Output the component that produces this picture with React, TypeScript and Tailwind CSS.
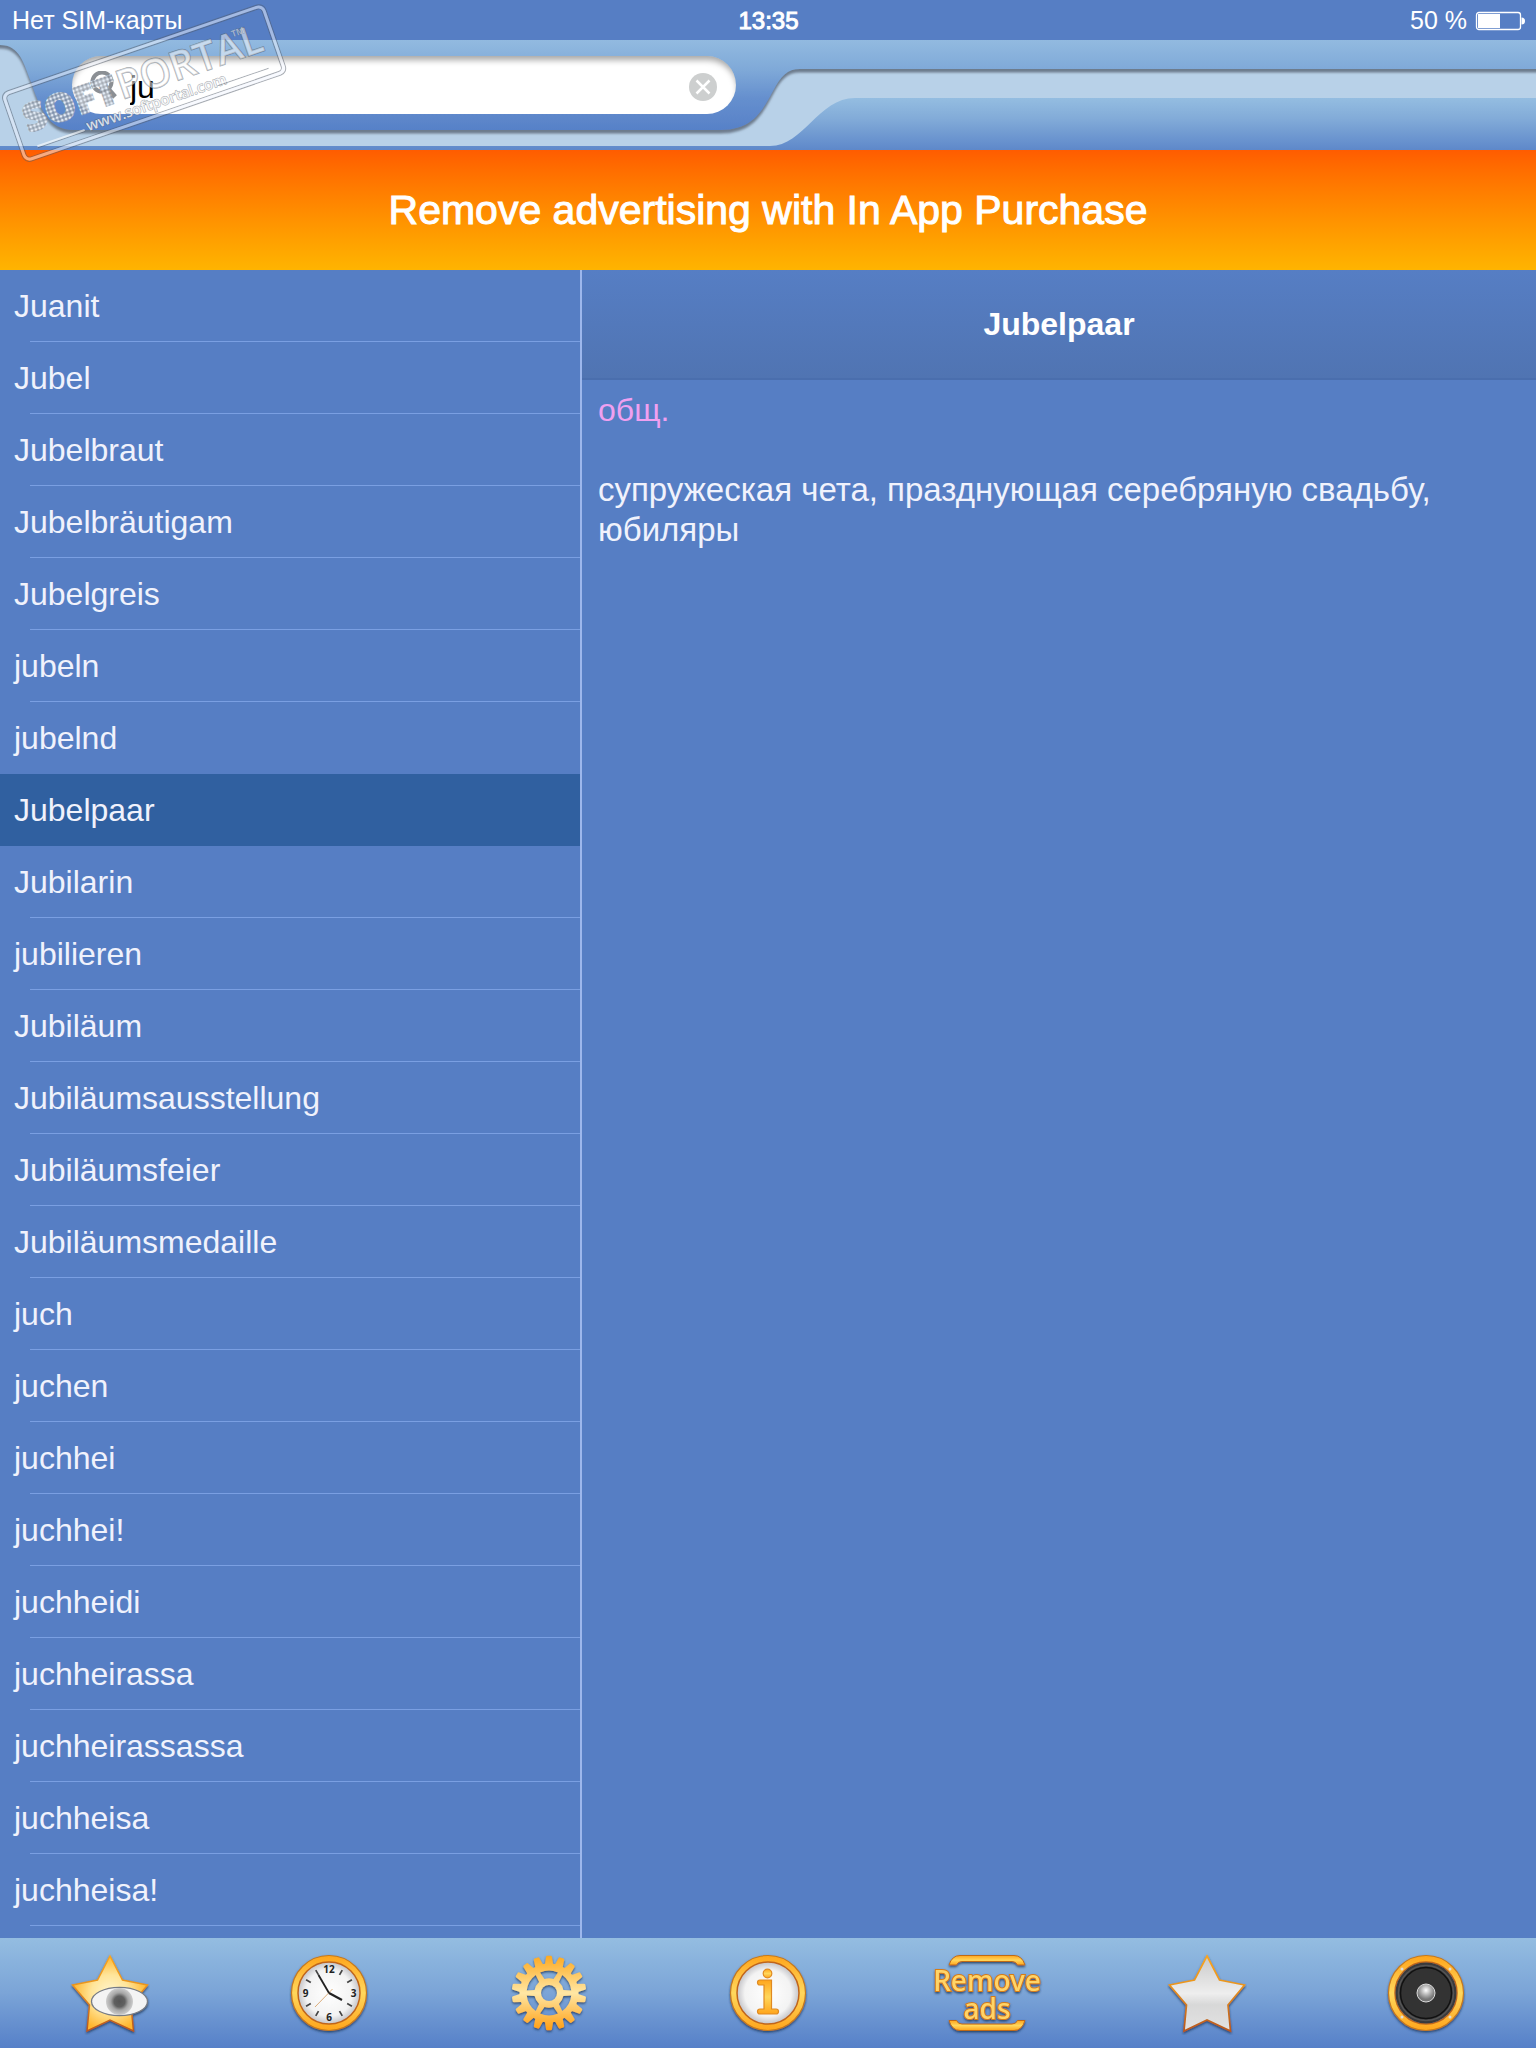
const words = [
  "Juanit", "Jubel", "Jubelbraut", "Jubelbräutigam", "Jubelgreis", "jubeln", "jubelnd", "Jubelpaar",
  "Jubilarin", "jubilieren", "Jubiläum", "Jubiläumsausstellung", "Jubiläumsfeier", "Jubiläumsmedaille",
  "juch", "juchen", "juchhei", "juchhei!", "juchheidi", "juchheirassa", "juchheirassassa", "juchheisa", "juchheisa!",
];

function Battery() {
  return (
    <svg width="50" height="20" viewBox="0 0 50 20" aria-label="Battery">
      <rect x="1.500" y="1.500" width="44" height="17" rx="2.5" fill="none" stroke="#fff" strokeWidth="1.3" />
      <rect x="3" y="3" width="22" height="14" fill="#fff" />
      <path d="M46.500 6.500q3.500 0 3.500 3.500t-3.500 3.500z" fill="#fff" />
    </svg>
  );
}

function Watermark() {
  return (
    <svg className="pointer-events-none absolute left-0 top-0" width="292" height="168" viewBox="0 0 292 168" aria-hidden="true">
      <defs>
        <pattern id="dots" width="4" height="4" patternUnits="userSpaceOnUse">
          <rect width="4" height="4" fill="#5c6672" fillOpacity=".65" />
          <rect x=".5" y=".5" width="3" height="3" fill="#e3ebf5" />
        </pattern>
      </defs>
      <g transform="translate(0 93) rotate(-19)" fontFamily="Open Sans, sans-serif">
        <g fill="none" stroke="#4f5a68" strokeOpacity=".5" strokeWidth="1">
          <rect x=".5" y=".5" width="278" height="74" rx="7" />
          <rect x="4.500" y="4.500" width="270" height="66" rx="4" />
        </g>
        <rect x="2.500" y="2.500" width="274" height="70" rx="6" fill="none" stroke="#f2f5ff" strokeOpacity=".5" strokeWidth="3" />
        <text x="14" y="47" fontSize="39" fontWeight="800" fill="url(#dots)" stroke="url(#dots)" strokeWidth="1.500">SOFT</text>
        <g stroke="#4f5a68" strokeOpacity=".5" paintOrder="stroke fill" fill="#fff" fillOpacity=".5">
          <text x="113" y="46" fontSize="40" fontWeight="600" strokeWidth="1.400">PORTAL</text>
          <text x="71" y="65" fontSize="15" fontWeight="600" strokeWidth="1" fillOpacity=".75">www.softportal.com</text>
          <text x="238" y="23" fontSize="9" fontWeight="600" strokeWidth=".6">TM</text>
        </g>
        <path d="M18 64H68M208 64H262" stroke="#4f5a68" strokeOpacity=".5" strokeWidth="1" />
        <path d="M18 62.500H68M208 62.500H262" stroke="#fff" strokeOpacity=".6" strokeWidth="2" />
      </g>
    </svg>
  );
}

function IconDefs() {
  return (
    <svg className="absolute" width="0" height="0" aria-hidden="true">
      <defs>
        <linearGradient id="ring" x1="0" y1="0" x2="0" y2="1">
          <stop offset="0" stopColor="#ffa51c" /><stop offset=".5" stopColor="#ffd75c" /><stop offset="1" stopColor="#ffa51c" />
        </linearGradient>
        <linearGradient id="edge" x1="0" y1="0" x2="0" y2="1">
          <stop offset="0" stopColor="#f9a51d" /><stop offset=".4" stopColor="#e8941f" /><stop offset="1" stopColor="#b9581d" />
        </linearGradient>
        <linearGradient id="silver" x1="0" y1="0" x2="0" y2="1">
          <stop offset="0" stopColor="#c9c9c9" /><stop offset=".5" stopColor="#eeeeee" /><stop offset=".65" stopColor="#d8d8d8" /><stop offset="1" stopColor="#e2e2e2" />
        </linearGradient>
        <radialGradient id="starGlow" cx=".5" cy=".5" r=".5">
          <stop offset="0" stopColor="#fff6cf" /><stop offset=".5" stopColor="#ffe59a" /><stop offset="1" stopColor="#ffb62e" />
        </radialGradient>
        <radialGradient id="face"><stop offset="0" stopColor="#fff" /><stop offset=".75" stopColor="#f3f3f3" /><stop offset="1" stopColor="#c4c4c8" /></radialGradient>
        <radialGradient id="pupil"><stop offset="0" stopColor="#555" /><stop offset=".4" stopColor="#606060" /><stop offset=".65" stopColor="#a5a5a5" /><stop offset="1" stopColor="#ccc" /></radialGradient>
        <radialGradient id="cap" cx=".5" cy=".35"><stop offset="0" stopColor="#fff" /><stop offset=".6" stopColor="#aaa" /><stop offset="1" stopColor="#777" /></radialGradient>
        <filter id="drop" x="-10%" y="-10%" width="120%" height="125%">
          <feDropShadow dx="0" dy="1.500" stdDeviation="0.8" floodColor="#23395c" floodOpacity=".85" />
        </filter>
      </defs>
    </svg>
  );
}

const star = "M40 3 52.500 27 77.500 32 61 52 63.500 78 40 67 17 78 19.500 52 2.500 32 27.500 27z";

function EyeStar() {
  return (
    <svg width="80" height="82" viewBox="0 0 80 82" aria-hidden="true">
      <g filter="url(#drop)">
        <path d={star} fill="url(#starGlow)" stroke="url(#edge)" strokeWidth="1.500" />
        <ellipse cx="49.500" cy="48.500" rx="28" ry="14.200" fill="#f4f4f4" stroke="#777c85" strokeWidth="1.300" />
      </g>
      <circle cx="49.500" cy="48.500" r="13.500" fill="url(#pupil)" />
    </svg>
  );
}

function Ring() {
  return (
    <>
      <circle cx="40" cy="40" r="37.500" fill="url(#ring)" stroke="#c47a1e" strokeWidth="1.200" filter="url(#drop)" />
      <circle cx="40" cy="40" r="31" fill="url(#face)" stroke="#c0651c" strokeWidth="1.500" />
    </>
  );
}

function Clock() {
  return (
    <svg width="80" height="82" viewBox="0 0 80 82" aria-hidden="true">
      <Ring />
      {[30, 60, 120, 150, 210, 240, 300, 330].map((a) => (
        <path key={a} d="M40 13.500v5.500" stroke="#444" strokeWidth="1.700" transform={`rotate(${a} 40 40)`} />
      ))}
      <g fontFamily="Open Sans, sans-serif" fontSize="10" fontWeight="700" textAnchor="middle" fill="#222">
        <text x="40" y="20">12</text><text x="64.500" y="43.500">3</text><text x="40" y="68">6</text><text x="16.500" y="43.500">9</text>
      </g>
      <path d="M43.500 36 26 54" stroke="#dcae7c" strokeWidth="1" />
      <path d="M40 40 29.500 22" stroke="#222" strokeWidth="1.800" />
      <path d="m40 40 13 7" stroke="#222" strokeWidth="2.200" />
    </svg>
  );
}

function Gear() {
  return (
    <svg width="80" height="82" viewBox="0 0 80 82" aria-hidden="true">
      <defs>
        <linearGradient id="gearGold" gradientUnits="userSpaceOnUse" x1="0" y1="2" x2="0" y2="78">
          <stop offset="0" stopColor="#fda81e" /><stop offset=".5" stopColor="#ffe7a4" /><stop offset="1" stopColor="#ff9d10" />
        </linearGradient>
        <mask id="gearMask" maskUnits="userSpaceOnUse" x="0" y="0" width="80" height="80">
          <g fill="#fff">
            <circle cx="40" cy="40" r="29.500" />
            {Array.from({ length: 18 }, (_, i) => (
              <path key={i} d="M35.800 12 37 4Q37.200 2.800 38.300 2.800H41.700Q42.800 2.800 43 4L44.200 12z" transform={`rotate(${i * 20} 40 40)`} />
            ))}
          </g>
          <circle cx="40" cy="40" r="8" fill="#000" />
          {[0, 60, 120, 180, 240, 300].map((a) => (
            <path key={a} d="M31 19.500Q40 15.500 49 19.500L44.500 26Q40 24.500 35.500 26z" fill="#000" transform={`rotate(${a} 40 40)`} />
          ))}
        </mask>
      </defs>
      <g filter="url(#drop)"><rect width="80" height="80" fill="url(#gearGold)" mask="url(#gearMask)" /></g>
    </svg>
  );
}

function Info() {
  return (
    <svg width="80" height="82" viewBox="0 0 80 82" aria-hidden="true">
      <Ring />
      <g fill="url(#ring)" stroke="#e08a22" strokeWidth="1.200">
        <circle cx="39.500" cy="20.500" r="4.300" />
        <path d="M32 27H43.500V56H48Q50.500 56 50.500 58.500T48 61H32Q29.500 61 29.500 58.500T32 56H36V32H32Q29.500 32 29.500 29.500T32 27z" />
      </g>
    </svg>
  );
}

function RemoveAds() {
  return (
    <svg width="120" height="82" viewBox="0 0 120 82" aria-hidden="true">
      <g filter="url(#drop)">
        <g transform="translate(5 0)" fill="url(#ring)" stroke="#bf6b18" strokeWidth="1">
          <path d="M17 12Q20 2.500 28 2.500H82Q90 2.500 93 12H85.500Q84 8.500 80 8.500H30Q26 8.500 24.500 12z" />
          <path d="M17 67.500H24.500Q26 71 30 71H80Q84 71 85.500 67.500H93Q90 77.500 82 77.500H28Q20 77.500 17 67.500z" />
        </g>
        <g fontFamily="Noto Sans, sans-serif" fontWeight="500" textAnchor="middle" fill="#ffd468" stroke="#d67d18" strokeWidth="2" paintOrder="stroke fill" fontSize="28">
          <text x="60" y="38">Remove</text>
          <text x="60" y="66">ads</text>
        </g>
      </g>
    </svg>
  );
}

function SilverStar() {
  return (
    <svg width="80" height="82" viewBox="0 0 80 82" aria-hidden="true">
      <path d={star} fill="url(#silver)" stroke="url(#edge)" strokeWidth="1.700" filter="url(#drop)" />
    </svg>
  );
}

function Speaker() {
  return (
    <svg width="80" height="82" viewBox="0 0 80 82" aria-hidden="true">
      <Ring />
      <circle cx="40" cy="40" r="30.500" fill="#3a3a3c" />
      <circle cx="40" cy="40" r="27.500" fill="none" stroke="#555" strokeWidth="1.500" />
      <circle cx="40" cy="40" r="25.500" fill="#333" stroke="#111" strokeWidth="1.500" />
      <circle cx="40" cy="40" r="9" fill="url(#cap)" stroke="#ddd" strokeWidth="1" />
      {[[16, 16], [64, 16], [16, 64], [64, 64]].map(([x, y]) => <circle key={`${x}-${y}`} cx={x} cy={y} r="1.500" fill="#ddd" />)}
    </svg>
  );
}

const tools = [
  { label: "Watch list", icon: <EyeStar /> },
  { label: "History", icon: <Clock /> },
  { label: "Settings", icon: <Gear /> },
  { label: "Information", icon: <Info /> },
  { label: "Remove ads", icon: <RemoveAds /> },
  { label: "Favourite", icon: <SilverStar /> },
  { label: "Pronounce", icon: <Speaker /> },
];

function HeaderArt() {
  return (
    <div className="absolute inset-0 overflow-hidden" aria-hidden="true">
      <svg className="max-w-none" width="3000" height="110" viewBox="0 0 3000 110">
        <defs>
          <linearGradient id="upper" gradientUnits="userSpaceOnUse" x1="0" y1="0" x2="0" y2="90">
            <stop offset="0" stopColor="#92bae0" /><stop offset=".33" stopColor="#7fa9d8" /><stop offset=".65" stopColor="#658fce" /><stop offset="1" stopColor="#5781c8" />
          </linearGradient>
          <linearGradient id="lower" gradientUnits="userSpaceOnUse" x1="0" y1="58" x2="0" y2="110">
            <stop offset="0" stopColor="#94bde1" /><stop offset=".4" stopColor="#82abd8" /><stop offset="1" stopColor="#5e88ca" />
          </linearGradient>
          <filter id="rim" x="-2%" y="-10%" width="104%" height="125%">
            <feDropShadow dx="0" dy="3.500" stdDeviation="1.200" floodColor="#54606e" floodOpacity=".75" />
          </filter>
        </defs>
        <rect width="3000" height="110" fill="#b8d1e8" />
        <path d="M-10-10V5H0C20 5 24 24 31 42C40 68 48 90 74 90H720C752 90 762 72 773 51C781 36 787 29 800 29H3010V-10z" fill="url(#upper)" filter="url(#rim)" />
        <path d="M0 106H770C804 106 818 58 855 58H3000V110H0z" fill="url(#lower)" />
      </svg>
    </div>
  );
}

export default function App() {
  return (
    <div className="relative flex h-screen flex-col overflow-hidden bg-[#567ec4] font-['Liberation_Sans',Arial,sans-serif] text-[#f0f2fc]">
      <IconDefs />
      <div className="grid h-10 shrink-0 grid-cols-3 items-center pl-3 pr-[11px] pt-0.5 text-[25px] text-white">
        <span>Нет SIM-карты</span>
        <span className="text-center text-2xl [-webkit-text-stroke:1px_white]">13:35</span>
        <span className="flex items-center justify-end gap-2">50 % <Battery /></span>
      </div>

      <header className="relative h-[110px] shrink-0">
        <HeaderArt />
        <label className="relative ml-18 mt-4 flex h-[58px] w-[664px] items-center rounded-full bg-white pl-4 pr-[19px] pt-1 shadow-[inset_0_6px_6px_-2px_rgba(0,0,0,0.35)]">
          <svg width="30" height="32" viewBox="0 0 30 32" fill="none" aria-hidden="true">
            <circle cx="14" cy="11" r="9.500" stroke="#8b8f94" strokeWidth="4" />
            <path d="m20 18 7 8" stroke="#8b8f94" strokeWidth="5" />
          </svg>
          <input type="text" aria-label="Search" defaultValue="ju" className="ml-3 min-w-0 flex-1 bg-transparent text-[32px] leading-9 text-black outline-none" />
          <button type="button" aria-label="Clear search">
            <svg width="28" height="28" viewBox="0 0 28 28" aria-hidden="true">
              <circle cx="14" cy="14" r="14" fill="#cdcfcf" />
              <path d="m7.500 7.500 13 13m0-13-13 13" stroke="#fff" strokeWidth="2.500" />
            </svg>
          </button>
        </label>
      </header>

      <button type="button" className="h-[120px] shrink-0 bg-linear-to-b from-[#ff5c00] to-[#ffb400] pt-0.5 text-[41px] text-white [-webkit-text-stroke:1px_white]">
        Remove advertising with In App Purchase
      </button>

      <main className="flex min-h-0 flex-1">
        <ul className="w-[582px] shrink-0 overflow-hidden border-r-2 border-[#9db7ec]">
          {words.map((word) => (
            <li key={word} className={word === "Jubelpaar" ? "bg-[#3060a0]" : ""}>
              <button type="button" className="relative block h-18 w-full pl-[14px] text-left text-[32px]">
                {word}
                {word !== "Jubelpaar" && word !== "jubelnd" && <span className="absolute bottom-0 left-[30px] right-0 h-px bg-[#7a9fe2]" />}
              </button>
            </li>
          ))}
        </ul>
        <article className="min-w-0 flex-1">
          <h1 className="flex h-[110px] items-center justify-center border-b-2 border-[#4a6ead] bg-linear-to-b from-[#567ec4] to-[#5074b2] text-[32px] font-bold text-white">Jubelpaar</h1>
          <div className="px-4 pt-[10px] leading-10">
            <p className="text-[32px] text-[#f0a0f0]">общ.</p>
            <p className="mt-10 text-[33px]">супружеская чета, празднующая серебряную свадьбу, юбиляры</p>
          </div>
        </article>
      </main>

      <nav className="grid h-[110px] shrink-0 grid-cols-7 bg-linear-to-b from-[#94bde1] via-[#7ba4d7] via-50% to-[#5680c8]">
        {tools.map((tool) => (
          <button key={tool.label} type="button" aria-label={tool.label} className="flex items-center justify-center pt-0.5">{tool.icon}</button>
        ))}
      </nav>
      <Watermark />
    </div>
  );
}
